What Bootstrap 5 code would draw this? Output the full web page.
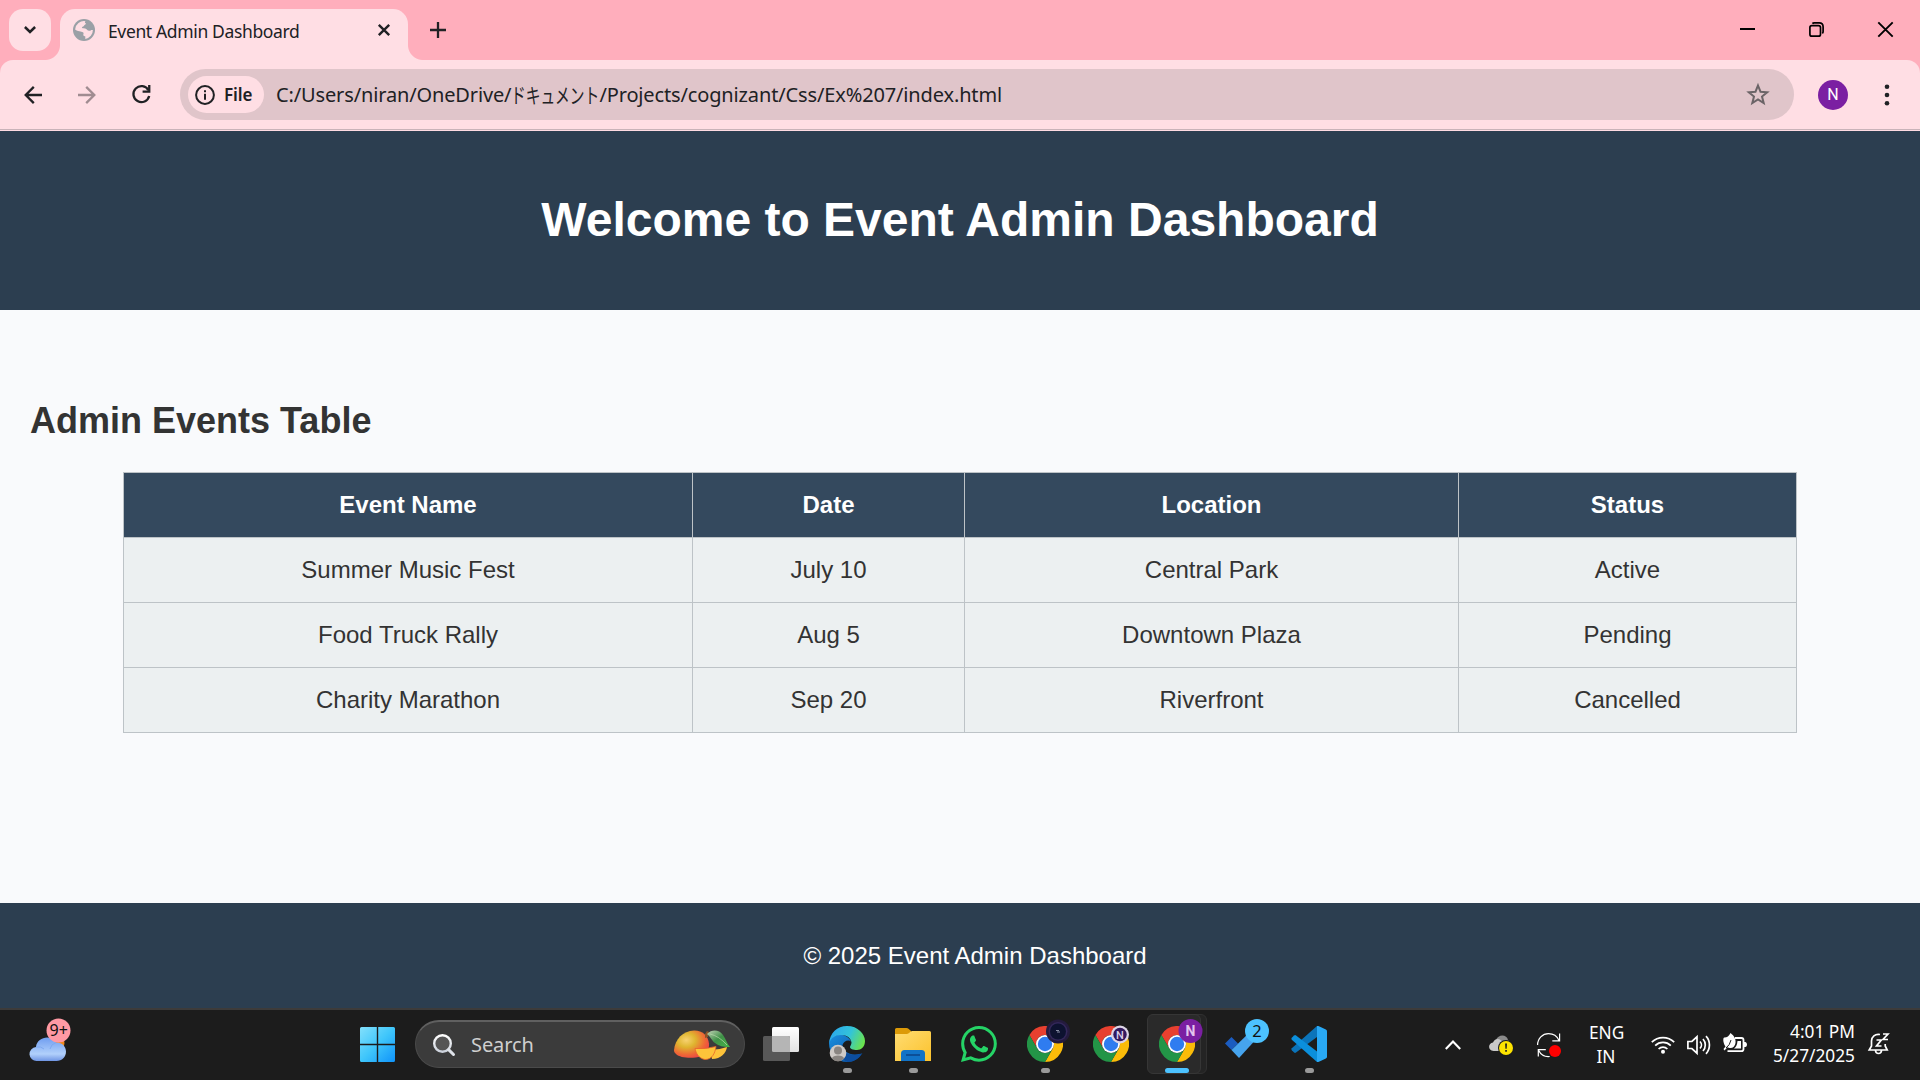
<!DOCTYPE html>
<html lang="en">
<head>
<meta charset="utf-8">
<meta name="viewport" content="width=device-width, initial-scale=1">
<title>Event Admin Dashboard</title>
<link href="https://cdn.jsdelivr.net/npm/bootstrap@5.3.0/dist/css/bootstrap.min.css" rel="stylesheet">
<style>
  body { width: 1920px; height: 1080px; font-family: "Liberation Sans", Arial, sans-serif; background: #f9fafc; }
  svg { display: block; flex: none; overflow: visible; }
  .ui-font { font-family: "Noto Sans", "Noto Sans CJK JP", sans-serif; color: #202124; }

  /* browser frame */
  .tab-strip { height: 60px; background: #ffaebc; padding-left: 9px; }
  .tab-search { width: 42px; height: 42px; border-radius: 14px; background: #ffdee4; margin: 9px 9px 0 0; }
  .page-tab { position: relative; width: 348px; height: 51px; margin-top: 9px; border-radius: 15px 15px 0 0; background: #ffdee4; padding: 0 18px 9px 13px; }
  .page-tab::before, .page-tab::after { content: ""; position: absolute; bottom: 0; width: 15px; height: 15px; }
  .page-tab::before { left: -15px; background: radial-gradient(circle at 0 0, transparent 14.5px, #ffdee4 15.5px); }
  .page-tab::after { right: -15px; background: radial-gradient(circle at 100% 0, transparent 14.5px, #ffdee4 15.5px); }
  .tab-title { font-size: 17.5px; line-height: 24px; margin-left: 13px; padding-top: 2px; letter-spacing: -.36px; }
  .window-buttons { padding: 22px 27px 0 0; gap: 54px; }
  .new-tab { margin: 22px 0 0 22px; }
  .toolbar-wrap { height: 71px; background: #ffaebc; }
  .address-row { height: 71px; background: #ffdee4; border-radius: 13px 13px 0 0; padding: 9px 28px 11px 24px; box-shadow: inset 0 -1px #ffdbe2, inset 0 -2px #c9b3b9; }
  .nav-icon { margin-left: 36px; }
  .omnibox { width: 1614px; height: 51px; background: #e0c5ca; padding: 0 24px 0 8px; margin-left: 29px; }
  .scheme-chip { width: 76px; height: 37px; background: #ffdee4; padding-left: 7px; font-size: 17px; font-weight: 600; }
  .scheme-label { margin-left: 9px; letter-spacing: -.1px; }
  .url-text { font-size: 20px; line-height: 28px; margin-left: 12px; white-space: nowrap; letter-spacing: -.14px; }
  .url-kana { display: inline-block; width: 88px; font-size: 21px; letter-spacing: 0; transform: scaleX(.7); transform-origin: 0 50%; line-height: 28px; vertical-align: bottom; }
  .profile-dot { width: 30px; height: 30px; background: #7b1fa2; color: #fff; font: 400 16px/30px Roboto, sans-serif; margin-left: 24px; }

  /* dashboard page */
  .hero { height: 179px; background: #2c3e50; padding-bottom: 2px; }
  .hero h1 { font-size: 48px; font-weight: 700; line-height: 1.15; }
  main { height: 593px; padding: 90px 30px 0; color: #333; }
  main h2 { font-size: 36px; font-weight: 700; line-height: 41px; margin-bottom: 31px; }
  .events-table { width: 1674px; table-layout: fixed; border-collapse: collapse; font-size: 24px; line-height: 28px; margin: 0 93px; }
  .events-table > :not(caption) > * > * { height: 65px; padding: 0; border: 1px solid #bdc3c7; background: #ecf0f1; color: #333; vertical-align: middle; }
  .events-table > thead > tr > th { background: #34495e; color: #fff; font-weight: 700; }
  .page-foot { height: 105px; background: #2c3e50; font-size: 24px; padding-left: 30px; }

  /* desktop taskbar */
  .taskbar { height: 72px; background: #1c1c1c; border-top: 2px solid #3d3b3a; }
  .taskbar, .taskbar .ui-font { color: #fff; }
  .weather { margin: 0 0 14px 29px; }
  .start-btn { margin: 0 0 1px 287px; }
  .search-pill { width: 330px; height: 48px; background: #3b3b3b; border: 1px solid #4a4a4a; border-top: 2px solid #606060; margin: 0 3px 2px 20px; padding: 0 14px 0 17px; }
  .search-pill .ui-font { font-size: 20px; color: #cfcfcf; margin-left: 16px; letter-spacing: -.1px; }
  .app-slot { position: relative; width: 66px; height: 70px; padding-top: 16px; }
  .run-dot { position: absolute; bottom: 7px; width: 9px; height: 5px; background: #9a9a9a; }
  .run-dot.wide-dot { width: 24px; background: #4cc2ff; }
  .tile-back, .tile-front { position: absolute; top: 4px; height: 60px; border-radius: 6px; border: 1px solid #363636; }
  .tile-back { left: 13px; width: 50px; background: #242424; border-color: #303030; }
  .tile-front { left: 3px; width: 54px; background: #2a2a2a; }
  .app-slot svg { position: relative; }
  .tray { padding-right: 31px; }
  .tray-text { font-size: 17.3px; line-height: 24px; white-space: nowrap; }
  .lang-box { width: 34px; margin-left: 28px; }
  .clock-box { width: 88px; margin-left: 20px; padding-bottom: 3px; }
</style>
</head>
<body class="d-flex flex-column overflow-hidden">

<svg width="0" height="0" class="position-absolute" aria-hidden="true">
  <defs>
    <symbol id="chrome-logo" viewBox="0 0 48 48">
      <path fill="#e8402f" d="M24 12H44.8A24 24 0 0 0 3.2 12L13.6 30A12 12 0 0 1 24 12z"/>
      <path fill="#fbbc09" d="M34.4 30L24 48A24 24 0 0 0 44.8 12H24A12 12 0 0 1 34.4 30z"/>
      <path fill="#239547" d="M13.6 30L3.2 12A24 24 0 0 0 24 48L34.4 30A12 12 0 0 1 13.6 30z"/>
      <circle cx="24" cy="24" r="12" fill="#fff"/><circle cx="24" cy="24" r="9.6" fill="#2f7cf0"/>
    </symbol>
    <linearGradient id="win" x1="0" y1="0" x2="1" y2="1"><stop offset="0" stop-color="#83e0fb"/><stop offset=".5" stop-color="#3fc6fb"/><stop offset="1" stop-color="#0f93fa"/></linearGradient>
    <linearGradient id="cloud" x1="0" y1="0" x2="0" y2="1"><stop offset="0" stop-color="#6f9df0"/><stop offset=".7" stop-color="#b1d0fb"/><stop offset="1" stop-color="#6f95e4"/></linearGradient>
    <linearGradient id="edgeTop" x1="0" y1=".3" x2="1" y2=".6"><stop offset="0" stop-color="#2ba7ee"/><stop offset=".55" stop-color="#33c4d8"/><stop offset="1" stop-color="#6be34b"/></linearGradient>
    <linearGradient id="edgeLow" x1="0" y1="0" x2="1" y2="1"><stop offset="0" stop-color="#1a90e0"/><stop offset="1" stop-color="#0a4b9c"/></linearGradient>
    <linearGradient id="fold" x1="0" y1="0" x2="1" y2="1"><stop offset="0" stop-color="#ffdc72"/><stop offset="1" stop-color="#fbc22c"/></linearGradient>
    <radialGradient id="mango" cx=".35" cy=".35" r=".75"><stop offset="0" stop-color="#f8d271"/><stop offset=".35" stop-color="#dfb52f"/><stop offset=".7" stop-color="#ee6a35"/><stop offset="1" stop-color="#ee3a4c"/></radialGradient>
    <linearGradient id="leaf" x1="0" y1="0" x2="1" y2="1"><stop offset="0" stop-color="#c4d2b8"/><stop offset=".5" stop-color="#3f9147"/><stop offset="1" stop-color="#45b649"/></linearGradient>
    <linearGradient id="tv" x1="0" y1="0" x2="0" y2="1"><stop offset="0" stop-color="#fff"/><stop offset="1" stop-color="#e2e2e2"/></linearGradient>
    <linearGradient id="glass" x1="0" y1="0" x2="0" y2="1"><stop offset="0" stop-color="#fff"/><stop offset="1" stop-color="#ccd2dc"/></linearGradient>
  </defs>
</svg>

<!-- tab strip -->
<div class="tab-strip ui-font d-flex">
  <div class="tab-search d-flex align-items-center justify-content-center">
    <svg width="12" height="8" viewBox="0 0 12 8" fill="none" stroke="#202124" stroke-width="2.5"><path d="M.9 1l5.1 5 5.1-5"/></svg>
  </div>
  <div class="page-tab d-flex align-items-center">
    <svg width="22" height="22" viewBox="0 0 22 22"><circle cx="11" cy="11" r="11" fill="#9aa0a6"/><path fill="#ffdee4" d="M12.500 2.200c-1 1-.6 1.700.3 2 .5 1.400-1.300 1.200-1.700 2.200-.2 1.400-2 .8-2.200 2.200 0 1 1.500.7 3.200.9 2 .2 2 2.500 4.500 2.200 1 0 1.200-1 3.300-.7a8.900 8.900 0 0 1-7.500 8.900c-.5-1 .3-1.600-.1-2.300-.6-.7-1.800-.2-2-1.500 0-1.200.6-1.600 0-2.600-1-1.200-3.800-.2-8.200-3A9 9 0 0 1 12.500 2.200z"/></svg>
    <span class="tab-title">Event Admin Dashboard</span>
    <svg class="ms-auto" width="12" height="12" viewBox="0 0 12 12" stroke="#202124" stroke-width="2.4"><path d="M.8.8l10.400 10.400M11.200.8L.8 11.200"/></svg>
  </div>
  <svg class="new-tab" width="16" height="16" viewBox="0 0 16 16" stroke="#202124" stroke-width="2.300"><path d="M8 0v16M0 8h16"/></svg>
  <div class="window-buttons d-flex ms-auto">
    <svg width="15" height="15" viewBox="0 0 15 15"><path fill="#000" d="M0 6h15v2H0z"/></svg>
    <svg width="15" height="15" viewBox="0 0 15 15" fill="none" stroke="#000" stroke-width="1.700"><rect x=".9" y="3.600" width="10.600" height="10.600" rx="2"/><path d="M3.400 1.600Q4 .9 5.200.9h5q3.900 0 3.900 3.900v4.700q0 1.200-.8 1.900"/></svg>
    <svg width="15" height="15" viewBox="0 0 15 15" stroke="#000" stroke-width="1.900"><path d="M.3.3l14.400 14.400M14.700.3L.3 14.700"/></svg>
  </div>
</div>

<!-- address row -->
<div class="toolbar-wrap">
<div class="address-row ui-font d-flex align-items-center">
  <svg width="18" height="18" viewBox="0 0 18 18" fill="none" stroke="#202124" stroke-width="2.300"><path d="M18 9H1.800M9.800.9L1.700 9l8.100 8.100"/></svg>
  <svg class="nav-icon" width="18" height="18" viewBox="0 0 18 18" fill="none" stroke="#a08c91" stroke-width="2.300"><path d="M0 9h16.200M8.200.9L16.300 9l-8.100 8.100"/></svg>
  <svg class="nav-icon" width="19" height="19" viewBox="0 0 19 19"><path d="M16.400 5.200A8 8 0 1 0 17.200 11" fill="none" stroke="#202124" stroke-width="2.300"/><path fill="#202124" d="M18.400 0v7.800h-7.800V5.500h5.500V0z"/></svg>
  <div class="omnibox rounded-pill d-flex align-items-center">
    <div class="scheme-chip rounded-pill d-flex align-items-center">
      <svg width="20" height="20" viewBox="0 0 20 20"><circle cx="10" cy="10" r="8.900" fill="none" stroke="#202124" stroke-width="2"/><path fill="#202124" d="M9 8.700h2v6H9zM9 5.200h2v2H9z"/></svg>
      <span class="scheme-label">File</span>
    </div>
    <span class="url-text">C:/Users/niran/OneDrive/<span class="url-kana">ドキュメント</span>/Projects/cognizant/Css/Ex%207/index.html</span>
    <svg class="ms-auto" width="24" height="23" viewBox="0 0 24 23" fill="none" stroke="#6b6467" stroke-width="2"><path d="M12 2.500l2.500 6.200 6.700.5-5.200 4.300 1.700 6.500L12 16.400 6.300 20 8 13.500 2.800 9.200l6.700-.5z"/></svg>
  </div>
  <div class="profile-dot rounded-circle text-center">N</div>
  <svg class="ms-auto" width="10" height="22" viewBox="0 0 10 22" fill="#202124"><circle cx="5" cy="2.700" r="2.300"/><circle cx="5" cy="11" r="2.300"/><circle cx="5" cy="19.300" r="2.300"/></svg>
</div>
</div>

<!-- dashboard -->
<header class="hero d-flex align-items-center justify-content-center text-white"><h1 class="m-0">Welcome to Event Admin Dashboard</h1></header>
<main>
  <h2>Admin Events Table</h2>
  <table class="table events-table text-center">
    <colgroup><col style="width:569px"><col style="width:272px"><col style="width:494px"><col></colgroup>
    <thead><tr><th>Event Name</th><th>Date</th><th>Location</th><th>Status</th></tr></thead>
    <tbody>
      <tr><td>Summer Music Fest</td><td>July 10</td><td>Central Park</td><td>Active</td></tr>
      <tr><td>Food Truck Rally</td><td>Aug 5</td><td>Downtown Plaza</td><td>Pending</td></tr>
      <tr><td>Charity Marathon</td><td>Sep 20</td><td>Riverfront</td><td>Cancelled</td></tr>
    </tbody>
  </table>
</main>
<footer class="page-foot d-flex align-items-center justify-content-center text-white">© 2025 Event Admin Dashboard</footer>

<!-- taskbar -->
<div class="taskbar d-flex align-items-center">
  <svg class="weather" width="44" height="48" viewBox="29 1014 44 48">
    <circle cx="56" cy="1043" r="8.500" fill="#f08a1d"/>
    <path fill="url(#cloud)" d="M37 1061a7 7 0 0 1-1-14c.5-6 6-9.500 11-9.500 4 0 7 2 8.500 5 6-.5 10.500 3.500 10.500 9s-4 9.500-9.500 9.500z"/>
    <path d="M36 1047q5-1 8 2M50 1049q1-5 6-6.500" fill="none" stroke="#7fa8f0" stroke-width="1"/>
    <circle cx="58.500" cy="1030.500" r="12" fill="#ff99a4"/>
    <text x="58.700" y="1036" text-anchor="middle" font-family="Noto Sans, sans-serif" font-size="16" fill="#111">9+</text>
  </svg>
  <svg class="start-btn" width="35" height="35" viewBox="0 0 35 35"><path fill="url(#win)" d="M1.500 0H16.800V16.800H0V1.500Q0 0 1.500 0zM18.200 0H33.500Q35 0 35 1.500V16.800H18.200zM0 18.200H16.800V35H1.500Q0 35 0 33.500zM18.200 18.200H35V33.500Q35 35 33.500 35H18.200z"/></svg>
  <div class="search-pill rounded-pill d-flex align-items-center">
    <svg width="22" height="22" viewBox="0 0 22 22" fill="none" stroke="url(#glass)" stroke-linecap="round"><circle cx="9.500" cy="9.500" r="8.300" stroke-width="2.400" fill="#555"/><path d="M15.600 15.600l4.900 4.900" stroke="#dfe3ea" stroke-width="3"/></svg>
    <span class="ui-font">Search</span>
    <svg class="ms-auto" width="56" height="30" viewBox="0 0 56 30">
      <path fill="url(#mango)" d="M0 20C1 9 9 1 20 .5c8-.3 14 5 15 13 .5 6-3 11-8 13C18 29 6 28 2 24 .5 22.500 0 22 0 20z"/>
      <path fill="#8b5428" d="M31 4l2-3 2 1-1 5-3 1z"/>
      <path fill="url(#leaf)" d="M33 4C38-1 45-.5 49 5c3 4.500 4 9 7 12-7 0-11-1-15-4-3-2-4-6-8-9z"/>
      <path d="M36 4q9 2 17 11" stroke="#b8d9a9" stroke-width=".7" fill="none"/>
      <path fill="#fdc33a" d="M36 20q9 0 17-3c-1 6-6 12-15 12z"/>
      <path fill="#fdc33a" stroke="#e9632b" stroke-width=".8" d="M21 18.500q10 1 21-2c-1 7-4 13-11 13-6-1-9-6-10-11z"/>
    </svg>
  </div>
  <div class="app-slot d-flex justify-content-center"><svg width="36" height="36" viewBox="0 0 36 36"><rect x="9" y="1" width="27" height="25" rx="1.500" fill="url(#tv)"/><rect x="0" y="10" width="27" height="25" rx="1.500" fill="#585858"/><path fill="#b5b5b5" d="M9 10h16.500Q27 10 27 11.500V26H10.500Q9 26 9 24.500z"/></svg></div>
  <div class="app-slot d-flex justify-content-center">
    <svg width="36" height="36" viewBox="0 0 36 36">
      <path fill="url(#edgeLow)" d="M0 17C1 11 7 8 13 9c4 .5 8 3 9 7l-7 1c-1 7 8 13 18 10C30 33 24 36 18 36 8 36 0 28 0 17z"/>
      <path fill="#0c4d9e" d="M13 18c-1 8 9 14 20.500 9C30 33 24 36 19 36 12 34 9 25 13 18z"/>
      <path fill="#1c1c1c" d="M13.500 19c1-4 6-6 8.500-3.500 0 3-1.500 3.500-1.500 5.500 1 3.500 8 4 12.500 3.500l.5 2.500C23 31 13 26 13.500 19z"/>
      <path fill="url(#edgeTop)" d="M0 17C1 7 8 0 18 0c11 0 18 8 18 15 0 6-4 9-8 9-4 0-7-1-7-3 0-1 1.500-2 1.500-4.500C22 12 18 9 12 9 6 9 2 12 0 17z"/>
      <circle cx="9" cy="27" r="8.300" fill="#cfcac6"/><circle cx="9" cy="24.500" r="4" fill="#8a8581"/><path fill="#8a8581" d="M2.800 32.500c1-4 11.500-4 12.400 0a8.300 8.300 0 0 1-12.400 0z"/>
    </svg><span class="run-dot rounded-pill"></span></div>
  <div class="app-slot d-flex justify-content-center">
    <svg width="36" height="36" viewBox="0 0 36 36"><path fill="#dc9a08" d="M0 3.500Q0 2 1.500 2h10q1.200 0 2 .8L16 5v6H0z"/><path fill="url(#fold)" d="M0 8h11.500q1.500 0 2.500-1l1.500-1.200q.8-.8 2-.8h17q1.500 0 1.500 1.500V35H0z"/><path fill="#1173c7" d="M6 35v-7.500Q6 24 9.500 24h17q3.500 0 3.500 3.500V35z"/><path fill="#0c4f97" d="M11 28h14v2H11z"/></svg>
    <span class="run-dot rounded-pill"></span></div>
  <div class="app-slot d-flex justify-content-center">
    <svg width="36" height="36" viewBox="0 0 16 16"><path fill="#25d366" d="M13.601 2.326A7.850 7.850 0 0 0 7.994 0C3.627 0 .068 3.558.064 7.926c0 1.399.366 2.760 1.057 3.965L0 16l4.204-1.102a7.900 7.900 0 0 0 3.790.965h.004c4.368 0 7.926-3.558 7.930-7.930A7.900 7.900 0 0 0 13.600 2.326zM7.994 14.521a6.600 6.600 0 0 1-3.356-.92l-.24-.144-2.494.654.666-2.433-.156-.251a6.560 6.560 0 0 1-1.007-3.505c0-3.626 2.957-6.584 6.591-6.584a6.560 6.560 0 0 1 4.660 1.931 6.560 6.560 0 0 1 1.928 4.660c-.004 3.639-2.961 6.592-6.592 6.592m3.615-4.934c-.197-.099-1.170-.578-1.353-.646-.182-.065-.315-.099-.445.099-.133.197-.513.646-.627.775-.114.133-.232.148-.43.05-.197-.1-.836-.308-1.592-.985-.59-.525-.985-1.175-1.103-1.372-.114-.198-.011-.304.088-.403.087-.088.197-.232.296-.346.1-.114.133-.198.198-.33.065-.134.034-.248-.015-.347-.05-.099-.445-1.076-.612-1.470-.16-.389-.323-.335-.445-.34-.114-.007-.247-.007-.38-.007a.73.73 0 0 0-.529.247c-.182.198-.691.677-.691 1.654s.71 1.916.81 2.049c.098.133 1.394 2.132 3.383 2.992.47.205.84.326 1.129.418.475.152.904.129 1.246.08.38-.058 1.171-.48 1.338-.943.164-.464.164-.86.114-.943-.049-.084-.182-.133-.38-.232"/></svg></div>
  <div class="app-slot d-flex justify-content-center">
    <svg width="36" height="36" viewBox="0 0 36 36"><use href="#chrome-logo" width="36" height="36"/><circle cx="31" cy="5.500" r="12" fill="#241b3d"/><circle cx="31" cy="5.500" r="9.500" fill="#33275a"/><circle cx="31" cy="5.500" r="8" fill="#0d1230"/><path fill="#8a90a6" d="M29 4h3v1h-3zM30 5.500h3v1h-3z"/></svg>
    <span class="run-dot rounded-pill"></span></div>
  <div class="app-slot d-flex justify-content-center">
    <svg width="36" height="36" viewBox="0 0 36 36"><use href="#chrome-logo" width="36" height="36"/><circle cx="27" cy="8.500" r="9" fill="#ddd5e6"/><circle cx="27" cy="8.500" r="6.700" fill="#33195f"/><text x="27" y="12.500" text-anchor="middle" font-family="Roboto, sans-serif" font-size="11" font-weight="500" fill="#d8cfe8">N</text></svg></div>
  <div class="app-slot d-flex justify-content-center">
    <span class="tile-back"></span><span class="tile-front"></span>
    <svg width="36" height="36" viewBox="0 0 36 36"><use href="#chrome-logo" width="36" height="36"/><circle cx="31.500" cy="5" r="12" fill="#7b1fa2"/><text x="31.500" y="10" text-anchor="middle" font-family="Roboto, sans-serif" font-size="14" font-weight="700" fill="#e3c4ee">N</text></svg>
    <span class="run-dot wide-dot rounded-pill"></span></div>
  <div class="app-slot d-flex justify-content-center">
    <svg width="36" height="36" viewBox="0 0 36 36"><path fill="#1b5cc0" d="M0 17.500L6.500 11 13 17.500 6.500 24z"/><path fill="#46a4ee" d="M6.500 24L28 3l6.500 6.500L14 32z"/><circle cx="32" cy="5" r="12" fill="#4cc2ff"/><text x="32" y="11" text-anchor="middle" font-family="Noto Sans, sans-serif" font-size="16.500" fill="#111">2</text></svg></div>
  <div class="app-slot d-flex justify-content-center">
    <svg width="36" height="36" viewBox="0 0 36 36"><path fill="#0b74ba" d="M26 0v11L5 26.600q-1 .6-1.900-.1L.8 24.300q-1-1 0-2z"/><path fill="#0b8fdc" d="M26 36V25.500L5 9.400q-1-.6-1.900.1L.8 11.700q-1 1 0 2z"/><path fill="#29a9f5" d="M26 0q.6-.2 1.400.1l7.500 3.500Q36 4.200 36 5.300v25.400q0 1.100-1.100 1.700l-7.500 3.500q-.8.300-1.400.1z"/></svg>
    <span class="run-dot rounded-pill"></span></div>

  <div class="tray d-flex align-items-center ms-auto">
    <svg width="16" height="10" viewBox="0 0 16 10" fill="none" stroke="#fff" stroke-width="2.100"><path d="M.8 9L8 1.500 15.200 9"/></svg>
    <svg style="margin-left:28px" width="24" height="22" viewBox="0 0 24 22"><path fill="#8b8b8b" d="M7 6c2-6 11-6 12 0 2 .5 2.500 3 2 5L9 14z"/><path fill="#c9c9c9" d="M4.500 17C-1.500 16.500-1 9 4 8.500 6 3.500 12 4 13.500 8.500L11 17z"/><circle cx="17" cy="14" r="8" fill="#1c1c1c"/><circle cx="17" cy="14" r="7" fill="#fde300"/><path fill="#222" d="M16.100 9.500h1.900l-.3 5.200h-1.300zM16.200 16h1.700v1.800h-1.700z"/></svg>
    <svg style="margin-left:24px" width="24" height="24" viewBox="0 0 24 24" fill="none" stroke="#fff" stroke-width="1.200"><path d="M.6 12C.6 5.500 5.500.7 11.500.7c4.500 0 8.500 2.300 10.500 6.800M22.600.5v7.300h-7.300M1.300 23.500v-6.800h7.500M1.700 17.500c2.300 4.500 6 6.500 11 6"/><circle cx="18" cy="18" r="6" fill="#f00" stroke="none"/></svg>
    <div class="tray-text lang-box ui-font text-center">ENG<br>IN</div>
    <svg style="margin-left:28px" width="24" height="18" viewBox="0 0 24 18" fill="none" stroke="#fff" stroke-width="1.700"><path d="M.8 6.200a15.800 15.800 0 0 1 22.400 0M4.200 9.700a11 11 0 0 1 15.600 0M7.600 13a6.200 6.200 0 0 1 8.800 0"/><circle cx="12" cy="15.700" r="2" fill="#fff" stroke="none"/></svg>
    <svg style="margin-left:12px" width="24" height="20" viewBox="0 0 24 20" fill="none" stroke="#fff" stroke-width="1.700"><path d="M.9 6.500h4L10 1.800v16.400L4.900 13.500h-4zM13 6.500a5 5 0 0 1 0 7M16 4a9 9 0 0 1 0 12M19 1.200a13 13 0 0 1 0 17.600"/></svg>
    <svg style="margin:0 0 5px 12px" width="24" height="20" viewBox="0 0 24 20"><path d="M12 5h6.500Q20.500 5 20.500 7v9q0 2.200-2.200 2.200H4.500" fill="none" stroke="#fff" stroke-width="1.800"/><path fill="#fff" d="M21 9h1.500Q24 9.500 24 11.500T22.500 14H21zM14.500 8H18v7.500h-7q3-2 3.500-7.500zM7.500 0c4 3 5.500 6 5 10-.4 3-2.500 5-5 5-1.500 0-2.300-.3-3-.8L1.500 17.500.5 16l2-2.500C-.5 9 0 4 1.500 4.500 4 4.500 6 3 7.500 0z"/><path d="M3 15q4-3 5-8" stroke="#1c1c1c" fill="none"/></svg>
    <div class="tray-text clock-box ui-font text-end">4:01 PM<br>5/27/2025</div>
    <svg style="margin:0 0 2px 13px" width="21" height="22" viewBox="0 0 21 22" fill="none" stroke="#fff" stroke-width="1.700"><path d="M12 1.500C7 .5 3.500 4 3.500 8v5L1.200 17h18l-2-4v-2M7.500 17.500c.3 4 5.700 4 6 0M8.500 7h4.800l-4.800 6h5M15 1h5l-5 5.500h5"/></svg>
  </div>
</div>
<script src="https://cdn.jsdelivr.net/npm/bootstrap@5.3.0/dist/js/bootstrap.bundle.min.js"></script>
</body>
</html>
